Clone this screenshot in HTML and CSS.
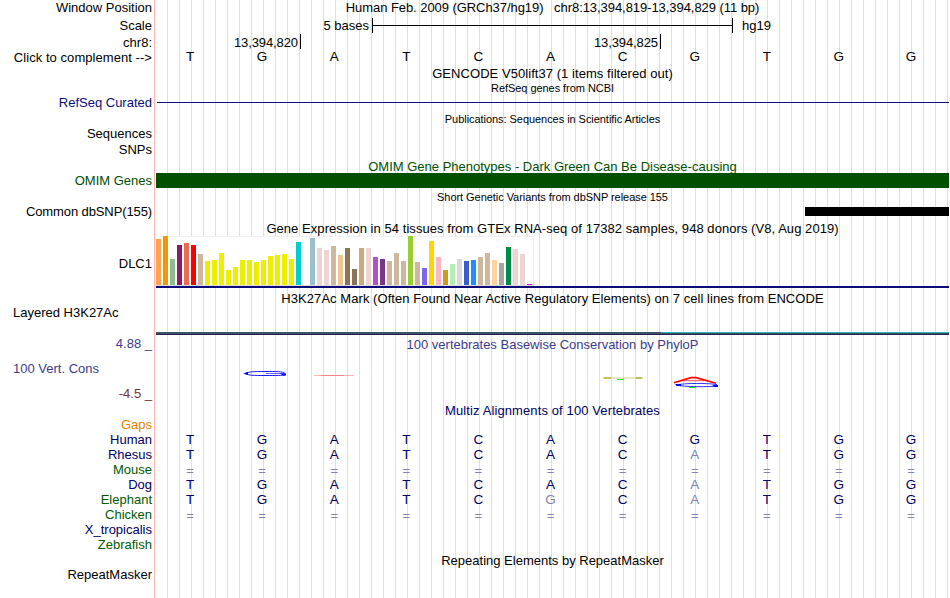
FILE: index.html
```
<!DOCTYPE html>
<html lang="en">
<head>
    <meta charset="UTF-8">
    <meta name="viewport" content="width=device-width, initial-scale=1.0">
    <title>Human chr8:13,394,819-13,394,829 Genome Browser</title>
    <link rel="stylesheet" href="styles.css">
</head>
<body>

<div class="browser">
    <div class="row h16">
        <div class="label">Window Position</div>
        <div class="track title position">Human Feb. 2009 (GRCh37/hg19)   chr8:13,394,819-13,394,829 (11 bp)</div>
    </div>
    <div class="row h18">
        <div class="label lower">Scale</div>
        <div class="track scale">
            <span class="scale-size">5 bases</span>
            <div class="scale-bar"></div>
            <span>hg19</span>
        </div>
    </div>
    <div class="row h16">
        <div class="label lower">chr8:</div>
        <div class="track ruler">
            <div class="tick">13,394,820</div>
            <div class="tick">13,394,825</div>
        </div>
    </div>
    <div class="row h15">
        <div class="label wide">Click to complement --&gt;</div>
        <div class="track bases sequence" data-bases="TGATCACGTGG"></div>
    </div>

    <!-- Genes -->
    <div class="row h16">
        <div class="label"></div>
        <div class="track title lower wide">GENCODE V50lift37 (1 items filtered out)</div>
    </div>
    <div class="row h15">
        <div class="label"></div>
        <div class="track title small">RefSeq genes from NCBI</div>
    </div>
    <div class="row h14">
        <div class="label refseq">RefSeq Curated</div>
        <div class="track"><div class="intron"></div></div>
    </div>

    <!-- Publications -->
    <div class="row h17">
        <div class="label"></div>
        <div class="track title small lower">Publications: Sequences in Scientific Articles</div>
    </div>
    <div class="row h14"><div class="label">Sequences</div></div>
    <div class="row h18"><div class="label">SNPs</div></div>

    <!-- OMIM and dbSNP -->
    <div class="row h14">
        <div class="label"></div>
        <div class="track title omim lower">OMIM Gene Phenotypes - Dark Green Can Be Disease-causing</div>
    </div>
    <div class="row h15">
        <div class="label omim">OMIM Genes</div>
        <div class="track omim-bar"></div>
    </div>
    <div class="row h18">
        <div class="label"></div>
        <div class="track title small">Short Genetic Variants from dbSNP release 155</div>
    </div>
    <div class="row h12">
        <div class="label narrow">Common dbSNP(155)</div>
        <div class="track"><div class="snp-bar"></div></div>
    </div>

    <!-- GTEx -->
    <div class="row h18">
        <div class="label"></div>
        <div class="track title gtex-title wide">Gene Expression in 54 tissues from GTEx RNA-seq of 17382 samples, 948 donors (V8, Aug 2019)</div>
    </div>
    <div class="row h52">
        <div class="label">DLC1</div>
        <div class="track gtex">
            <div class="gtex-bars" id="gtexBars"></div>
        </div>
    </div>

    <!-- H3K27Ac -->
    <div class="row h20">
        <div class="label"></div>
        <div class="track title lower wide">H3K27Ac Mark (Often Found Near Active Regulatory Elements) on 7 cell lines from ENCODE</div>
    </div>
    <div class="row h27 wiggle">
        <div class="label left">Layered H3K27Ac</div>
        <div class="track signal"><div class="signal-high"></div></div>
    </div>

    <!-- Conservation -->
    <div class="row h18">
        <div class="label phylop">4.88 _</div>
        <div class="track title phylop lower">100 vertebrates Basewise Conservation by PhyloP</div>
    </div>
    <div class="row h49">
        <div class="label cons-labels">
            <div class="cons-name phylop">100 Vert. Cons</div>
            <div class="cons-min">-4.5 _</div>
        </div>
        <svg class="track" width="793" height="49" viewBox="156 353 793 49">
            <g fill="none" stroke="#0000ff">
                <path d="M285 373.4 C282 371.3 277 371.5 265 371.5 C253 371.5 249 371.7 245 373.5 C249 375.5 253 375.5 265 375.5 C277 375.5 282 375.5 285 375" stroke-width="0.9"/>
                <path d="M266 373.5 H284" stroke-width="0.6"/>
            </g>
            <path d="M243 373.5 L248 372 V375 Z M280 373.5 H286 V375.6 H283 Z" fill="#0000ff"/>
            <path d="M314 375.5 H354" stroke="#ff8c8c" stroke-width="0.6"/>
            <path d="M321 375.5 H344" stroke="#f07878" stroke-width="0.8"/>
            <path d="M603 378 H643" stroke="#c8c878" stroke-width="1.6" opacity="0.6"/>
            <path d="M604 378 H611 M636 378 H642" stroke="#b4b43c" stroke-width="1.4"/>
            <path d="M617 379.5 H623" stroke="#00ff00"/>
            <path d="M674 382.8 L691 377.6 H696 L716 383.2" fill="none" stroke="#ff0000" stroke-width="1.7"/>
            <path d="M683 380.7 H704" stroke="#ff0000" stroke-width="0.7"/>
            <path d="M717 384.6 C708 383 684 383 676 385 C684 387 708 387 717 386" fill="none" stroke="#0000ff" stroke-width="0.8"/>
            <path d="M675 384 H681 V386 H677 Z M712 385 H718 V387 H715 Z" fill="#0000ff"/>
            <path d="M689 387.5 H695" stroke="#00ff00"/>
        </svg>
    </div>
    <div class="row h16">
        <div class="label"></div>
        <div class="track title aligned lower wider">Multiz Alignments of 100 Vertebrates</div>
    </div>
    <div class="row h14"><div class="label gaps">Gaps</div></div>
    <div class="row h15">
        <div class="label aligned">Human</div>
        <div class="track bases aligned" data-bases="TGATCACGTGG"></div>
    </div>
    <div class="row h15">
        <div class="label aligned">Rhesus</div>
        <div class="track bases aligned" data-bases="TGATCACATGG"></div>
    </div>
    <div class="row h15">
        <div class="label species-alt">Mouse</div>
        <div class="track bases aligned" data-bases="==========="></div>
    </div>
    <div class="row h15">
        <div class="label aligned">Dog</div>
        <div class="track bases aligned" data-bases="TGATCACATGG"></div>
    </div>
    <div class="row h15">
        <div class="label species-alt">Elephant</div>
        <div class="track bases aligned" data-bases="TGATCGCATGG"></div>
    </div>
    <div class="row h15">
        <div class="label species-alt">Chicken</div>
        <div class="track bases aligned" data-bases="==========="></div>
    </div>
    <div class="row h15"><div class="label aligned">X_tropicalis</div></div>
    <div class="row h15"><div class="label species-alt">Zebrafish</div></div>

    <!-- RepeatMasker -->
    <div class="row h16">
        <div class="label"></div>
        <div class="track title lower">Repeating Elements by RepeatMasker</div>
    </div>
    <div class="row h14"><div class="label">RepeatMasker</div></div>
</div>

<script>
    const reference = "TGATCACGTGG";

    // One entry per tissue: bar height in pixels and tissue color
    const tissues = [
        [46, "#ffa54f"], [49, "#ee9a00"], [26, "#8fbc8f"], [40, "#8b1c62"], [42, "#ee6a50"],
        [40, "#ff0000"], [31, "#cdb79e"], [24, "#eeee00"], [25, "#eeee00"], [32, "#eeee00"],
        [15, "#eeee00"], [18, "#eeee00"], [25, "#eeee00"], [25, "#eeee00"], [23, "#eeee00"],
        [25, "#eeee00"], [29, "#eeee00"], [30, "#eeee00"], [31, "#eeee00"], [26, "#eeee00"],
        [43, "#00cdcd"], [0, "#ee82ee"], [47, "#9ac0cd"], [37, "#eed5d2"], [35, "#eed5d2"],
        [39, "#cdb79e"], [30, "#eec591"], [37, "#8b7355"], [16, "#8b7355"], [37, "#cdaa7d"],
        [37, "#eed5d2"], [28, "#b452cd"], [26, "#7a378b"], [24, "#cdb79e"], [32, "#cdb79e"],
        [24, "#cdb79e"], [49, "#9acd32"], [23, "#cdb79e"], [17, "#7a67ee"], [44, "#ffd700"],
        [28, "#ffb6c1"], [15, "#cd9b1d"], [21, "#b4eeb4"], [26, "#d9d9d9"], [24, "#3a5fcd"],
        [25, "#1e90ff"], [28, "#cdb79e"], [32, "#cdb79e"], [25, "#ffd39b"], [22, "#a6a6a6"],
        [38, "#008b45"], [36, "#eed5d2"], [31, "#eed5d2"], [1, "#ff00ff"]
    ];

    const gtexBars = document.getElementById("gtexBars");
    tissues.forEach(([height, color]) => {
        const bar = document.createElement("div");
        bar.className = "gtex-bar";
        bar.style.height = height + "px";
        bar.style.backgroundColor = color;
        gtexBars.appendChild(bar);
    });

    // Bases that differ from the reference are drawn lighter
    document.querySelectorAll(".bases").forEach(row => {
        [...row.dataset.bases].forEach((base, index) => {
            const cell = document.createElement("span");
            cell.textContent = base;
            if (base === "=") {
                cell.className = "gap";
            } else if (base !== reference[index]) {
                cell.className = "mismatch";
            }
            row.appendChild(cell);
        });
    });
</script>

</body>
</html>
```
FILE: styles.css
```
body {
    margin: 0;
    background-color: #fff;
    color: #000;
    font-family: "Liberation Sans", Arial, sans-serif;
    font-size: 13px;
}
.browser {
    width: 950px;
    height: 598px;
    overflow: hidden;
    /* red edge of the label column, then a guide line every 12px */
    background:
        linear-gradient(#ffb4b4, #ffb4b4) 154px 0 / 1px 100% no-repeat,
        repeating-linear-gradient(to right, transparent 0 11px, #dcdcf8 11px 12px) 156px 0 / 794px 100% no-repeat;
}
.row {
    display: grid;
    grid-template-columns: 152px 793px;
    column-gap: 4px;
    white-space: nowrap;
}
.h12 { height: 12px; line-height: 12px; }
.h14 { height: 14px; line-height: 14px; }
.h15 { height: 15px; line-height: 15px; }
.h16 { height: 16px; line-height: 16px; }
.h17 { height: 17px; line-height: 17px; }
.h18 { height: 18px; line-height: 18px; }
.h20 { height: 20px; line-height: 20px; }
.h27 { height: 27px; line-height: 9px; }
.h49 { height: 49px; line-height: 17px; }
.h52 { height: 52px; line-height: 55px; }
.label {
    text-align: right;
}
.label.left {
    text-align: left;
    padding-left: 13px;
}
.title {
    text-align: center;
}
.lower {
    padding-top: 1px;
}
.position {
    letter-spacing: -0.06px;
    white-space: pre;
}
.small {
    font-size: 11px;
    letter-spacing: -0.05px;
}
.wide {
    letter-spacing: 0.055px;
}
.wider {
    letter-spacing: 0.11px;
}
.narrow {
    letter-spacing: -0.11px;
}
.refseq {
    color: #0c0c78;
}
.omim {
    color: #005000;
}
.phylop {
    color: #3c3c8c;
}
.aligned {
    color: #000064;
}
.species-alt {
    color: #005a00;
}
.gaps {
    color: #e68200;
}

/* Scale and ruler */
.scale {
    display: flex;
    align-items: center;
}
.scale-size {
    width: 213px;
    margin-right: 3px;
    text-align: right;
}
.scale-bar {
    box-sizing: border-box;
    width: 361px;
    height: 15px;
    margin-right: 9px;
    border-left: 1px solid #000;
    border-right: 1px solid #000;
    background: linear-gradient(#000, #000) 0 7px / 100% 1px no-repeat;
}
.ruler {
    display: flex;
    line-height: 18px;
}
.tick {
    box-sizing: border-box;
    width: 145px;
    height: 15px;
    padding-right: 2px;
    border-right: 1px solid #000;
    letter-spacing: -0.1px;
    text-align: right;
}
.tick + .tick {
    width: 360px;
}
.bases {
    display: grid;
    grid-template-columns: repeat(11, 1fr);
    margin-left: -2px;
    margin-right: 2px;
    font-size: 13.5px;
    text-align: center;
}
.sequence {
    line-height: 13px;
}
.gap,
.mismatch {
    color: #8282b4;
}
.gap {
    padding-top: 1px;
    font-size: 13px;
}

/* Items drawn in the tracks */
.intron {
    height: 1px;
    margin: 6px 0 0 1px;
    background-color: #0c0c78;
}
.omim-bar {
    background-color: #005000;
}
.snp-bar {
    height: 9px;
    margin: 1px 0 0 649px;
    background-color: #000;
}
.gtex-title {
    line-height: 22px;
}
.gtex {
    position: relative;
    align-self: start;
    height: 50px;
    border-bottom: 2px solid #0c0c78;
}
.gtex-bars {
    box-sizing: border-box;
    display: flex;
    align-items: flex-end;
    gap: 2px;
    width: 378px;
    height: 50px;
    border-bottom: 1px solid #dcdcdc;
    background-color: #fff;
    box-shadow: inset -1px 1px #f0f0f0;
}
.gtex-bar {
    width: 5px;
}
.signal {
    align-self: end;
    height: 2px;
    border-bottom: 1px solid #281e50;
    background-color: #3c5564;
}
.signal-high {
    height: 1px;
    margin-left: 505px;
    background-color: #28b4be;
}
.cons-name {
    padding: 7px 0 8px 13px;
    text-align: left;
}
.cons-min {
    color: #783232;
}
```
